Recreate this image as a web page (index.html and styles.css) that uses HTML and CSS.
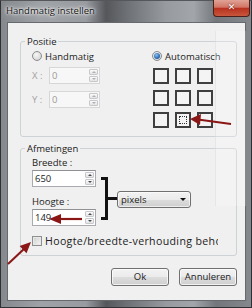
FILE: index.html
```html
<!doctype html>
<html>
<head>
	<meta charset="UTF-8">
	<title>Handmatig instellen</title>
	<link rel="stylesheet" href="styles.css">
</head>
<body>
	<div class="venster">
		<div class="titelbalk">
			<span class="titel">Handmatig instellen</span>
			<span class="sluiten">✕</span>
		</div>
		<div class="inhoud">
			<fieldset class="groep">
				<legend>Positie</legend>
				<div class="positie">
					<div class="kolom links">
						<label class="keuze"><span class="rondje"></span>Handmatig</label>
						<div class="veld uit eerste"><span class="as">X :</span><div class="getal kort"><span>0</span><span class="pijltjes"><i class="op"></i><i class="neer"></i></span></div></div>
						<div class="veld uit"><span class="as">Y :</span><div class="getal kort"><span>0</span><span class="pijltjes"><i class="op"></i><i class="neer"></i></span></div></div>
					</div>
					<div class="kolom">
						<label class="keuze"><span class="rondje aan"></span>Automatisch</label>
						<div class="raster">
							<span class="vak"></span><span class="vak"></span><span class="vak"></span>
							<span class="vak"></span><span class="vak"></span><span class="vak"></span>
							<span class="vak"></span><span class="vak gekozen"></span><span class="vak"></span>
						</div>
					</div>
				</div>
			</fieldset>
			<fieldset class="groep tweede">
				<legend>Afmetingen</legend>
				<div class="maten">
					<div class="kolom">
						<div class="label">Breedte :</div>
						<div class="getal"><span>650</span><span class="pijltjes"><i class="op"></i><i class="neer"></i></span></div>
						<div class="label lager">Hoogte :</div>
						<div class="getal"><span>149</span><span class="pijltjes"><i class="op"></i><i class="neer"></i></span></div>
					</div>
					<div class="haak"><span class="boog"></span><span class="steel"></span></div>
					<div class="keuzelijst"><span>pixels</span><i class="driehoek"></i></div>
				</div>
				<label class="vinkje"><span class="hokje"></span>Hoogte/breedte-verhouding behouden</label>
			</fieldset>
			<div class="knoppen">
				<button class="knop">Ok</button>
				<button class="knop">Annuleren</button>
			</div>
		</div>
		<div class="geest"></div>
		<svg class="pijlen" width="252" height="308" viewBox="0 0 252 308">
			<line x1="231" y1="124" x2="198" y2="119.5" stroke="#8a1616" stroke-width="2"/>
			<polygon points="190,119 201,114 200,125" fill="#8a1616"/>
			<line x1="82" y1="219" x2="58" y2="219" stroke="#8a1616" stroke-width="2.2"/>
			<polygon points="49,219 61,214 61,224" fill="#8a1616"/>
			<line x1="8" y1="264" x2="25" y2="248" stroke="#8a1616" stroke-width="2"/>
			<polygon points="31,242 26.5,253.2 19.6,246" fill="#8a1616"/>
		</svg>
	</div>
</body>
</html>
```

FILE: styles.css
```css
*{
	margin:0;
	padding:0;
	box-sizing:border-box;
}
body{
	font-family:"Open Sans", sans-serif;
	font-size:9.5px;
	color:#1b1b1b;
	background:#5c5e62;
}
.venster{
	position:relative;
	width:252px;
	height:308px;
	display:flex;
	flex-direction:column;
	padding:0 5px 6px 6px;
	border:1px solid #303134;
	border-top-color:#55575b;
	background:linear-gradient(90deg,#85898e 0%,#9fa2a6 16%,#989ba0 34%,#55575b 42%,#6c6f73 50%,#979a9e 66%,#a2a5a9 77%,#73767a 86%,#85888c 100%);
}
.titelbalk{
	height:21px;
	margin:0 -5px 0 -6px;
	display:flex;
	align-items:flex-start;
	justify-content:space-between;
}
.titel{
	margin:3px 0 0 5px;
	line-height:13px;
	color:#111;
	text-shadow:0 0 6px #fff,0 0 3px #fff,0 0 2px rgba(255,255,255,.8);
}
.sluiten{
	width:37px;
	height:17px;
	margin:-1px 1px 0 0;
	border:1px solid #4d1f1a;
	border-top:0;
	border-radius:0 0 4px 4px;
	background:linear-gradient(#e0a396,#d17566 45%,#b8321f 52%,#c9563c);
	color:#fff;
	font:bold 9px/15px "DejaVu Sans", sans-serif;
	text-align:center;
	text-shadow:0 0 2px #5a1208;
}
.inhoud{
	flex:1;
	background:#f0f0f0;
	border:1px solid #66696d;
	padding:12px 8px 0 12px;
	display:flex;
	flex-direction:column;
}
.groep{
	border:1px solid #cdd2d6;
	border-radius:3px;
	padding:1px 8px 8px 11px;
	min-width:0;
}
.groep legend{
	margin-left:-7px;
	padding:0 2px;
	line-height:13px;
}
.tweede{
	margin-top:5px;
	padding-bottom:7px;
}
.positie{
	display:flex;
}
.links{
	width:120px;
}
.keuze{
	display:flex;
	align-items:center;
	gap:3px;
	height:14px;
}
.rondje{
	width:10px;
	height:10px;
	border-radius:50%;
	border:1px solid #8b8c8e;
	background:radial-gradient(circle at 40% 35%,#f7f7f7 0,#dedede 60%,#c9c9c9 100%);
	display:flex;
	align-items:center;
	justify-content:center;
}
.rondje.aan::after{
	content:"";
	width:6px;
	height:6px;
	border-radius:50%;
	background:radial-gradient(circle at 40% 35%,#8cc0ef 0,#2d6cb5 60%,#1b4a86 100%);
}
.veld{
	display:flex;
	align-items:center;
	margin-top:7px;
}
.veld.eerste{
	margin-top:4px;
}
.as{
	width:17px;
	color:#a2a2a2;
}
.getal{
	width:64px;
	height:17px;
	border:1px solid #a9abb0;
	border-top-color:#8f9195;
	background:#fff;
	display:flex;
	align-items:center;
	justify-content:space-between;
	padding-left:2px;
	line-height:13px;
}
.getal.kort{
	width:51px;
}
.uit .getal{
	border-color:#d6d7d9;
	background:#f7f7f7;
	color:#9a9a9a;
}
.pijltjes{
	width:9px;
	height:13px;
	margin-right:1px;
	display:flex;
	flex-direction:column;
	gap:1px;
}
.pijltjes i{
	flex:1;
	border:1px solid #c6c8cb;
	border-radius:1px;
	background:linear-gradient(#fafafa,#e4e4e4);
	display:flex;
	align-items:center;
	justify-content:center;
}
.pijltjes i::after{
	content:"";
	border-left:2px solid transparent;
	border-right:2px solid transparent;
}
.pijltjes .op::after{
	border-bottom:2px solid #4a4a4a;
}
.pijltjes .neer::after{
	border-top:2px solid #4a4a4a;
}
.uit .pijltjes i::after{
	border-top-color:#b0b0b0;
	border-bottom-color:#b0b0b0;
}
.raster{
	display:grid;
	grid-template-columns:repeat(3,16px);
	grid-auto-rows:16px;
	gap:6px;
	margin:5px 0 0 1px;
}
.vak{
	border:2px solid #3f3f3f;
	background:#f4f4f4;
	display:flex;
	padding:2px;
}
.vak.gekozen::after{
	content:"";
	flex:1;
	border:1px dotted #333;
}
.maten{
	display:flex;
	align-items:flex-end;
}
.label{
	line-height:13px;
	margin-bottom:1px;
}
.label.lager{
	margin-top:8px;
}
.haak{
	display:flex;
	align-items:center;
	margin:0 0 6px 5px;
}
.boog{
	width:7px;
	height:43px;
	border:3px solid #111;
	border-left:0;
}
.steel{
	width:9px;
	height:3px;
	background:#111;
}
.keuzelijst{
	width:74px;
	height:17px;
	margin-bottom:18px;
	border:1px solid #707070;
	border-radius:3px;
	background:linear-gradient(#f2f2f2 0,#ebebeb 50%,#dddddd 50%,#cfcfcf 100%);
	box-shadow:inset 0 0 0 1px rgba(255,255,255,.6);
	display:flex;
	align-items:center;
	justify-content:space-between;
	padding:0 4px 0 3px;
	line-height:13px;
}
.driehoek{
	border-left:3px solid transparent;
	border-right:3px solid transparent;
	border-top:3px solid #111;
}
.vinkje{
	display:flex;
	align-items:center;
	gap:3px;
	height:14px;
	margin-top:8px;
	width:186px;
	overflow:hidden;
	white-space:nowrap;
	font-size:10.6px;
	letter-spacing:0.35px;
}
.hokje{
	flex:none;
	width:10px;
	height:10px;
	border:1px solid #8e8f8f;
	background:linear-gradient(135deg,#cfcfcf,#f6f6f6);
	box-shadow:inset 0 0 0 1px #e8e8e8;
}
.knoppen{
	display:flex;
	justify-content:flex-end;
	gap:10px;
	margin-top:12px;
}
.knop{
	width:58px;
	height:18px;
	border:1px solid #707070;
	border-radius:3px;
	background:linear-gradient(#f2f2f2 0,#ebebeb 50%,#dddddd 50%,#cfcfcf 100%);
	box-shadow:inset 0 0 0 1px rgba(255,255,255,.7);
	font-family:"Open Sans", sans-serif;
	font-size:9.5px;
	color:#1b1b1b;
	line-height:14px;
}
.geest{
	position:absolute;
	left:214px;
	top:30px;
	width:31px;
	height:175px;
	background:rgba(255,255,255,.22);
	border-left:1px solid rgba(210,210,210,.4);
}
.pijlen{
	position:absolute;
	left:-1px;
	top:-1px;
}
```
